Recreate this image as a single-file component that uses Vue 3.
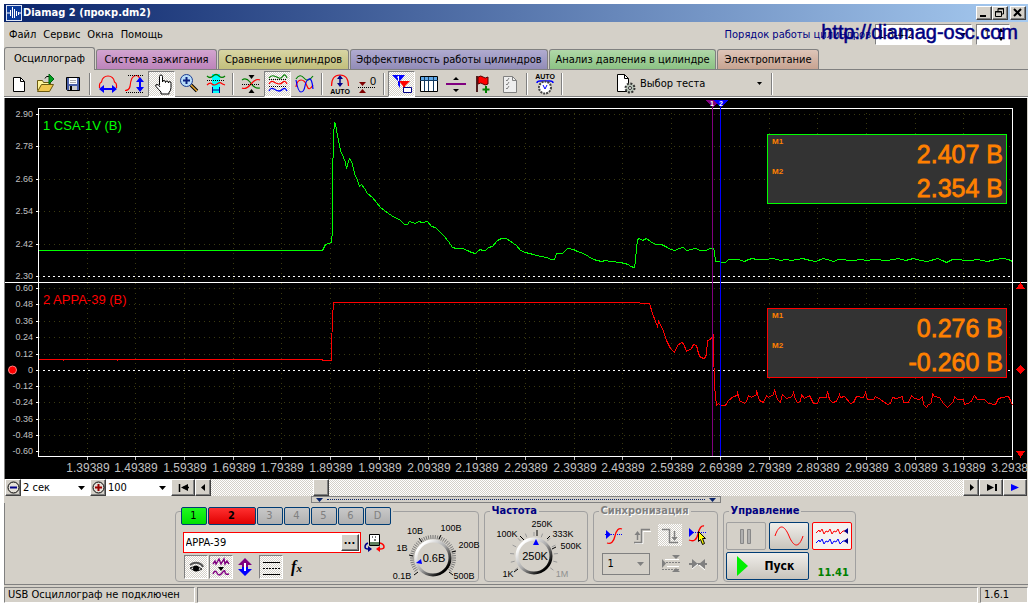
<script setup>
import { ref } from 'vue'

const tabs = [
  { id: 'osc', label: 'Осциллограф' },
  { id: 'ign', label: 'Система зажигания' },
  { id: 'cmp', label: 'Сравнение цилиндров' },
  { id: 'eff', label: 'Эффективность работы цилиндров' },
  { id: 'prs', label: 'Анализ давления в цилиндре' },
  { id: 'pow', label: 'Электропитание' }
]
const activeTab = ref('osc')
const menu = ['Файл', 'Сервис', 'Окна', 'Помощь']

const timeTicks = [
  [87, '1.39389'], [135, '1.49389'], [184, '1.59389'], [233, '1.69389'], [281, '1.79389'],
  [330, '1.89389'], [379, '1.99389'], [428, '2.09389'], [476, '2.19389'], [525, '2.29389'],
  [574, '2.39389'], [622, '2.49389'], [671, '2.59389'], [720, '2.69389'], [769, '2.79389'],
  [817, '2.89389'], [866, '2.99389'], [915, '3.09389'], [963, '3.19389'], [1012, '3.29389']
]
const levelTicks = [
  [114, '2.90'], [146, '2.78'], [179, '2.66'], [211, '2.54'], [244, '2.42'], [276, '2.30'],
  [288, '0.60'], [304, '0.48'], [321, '0.36'], [337, '0.24'], [354, '0.12'], [370, '0'],
  [386, '-0.12'], [402, '-0.24'], [419, '-0.36'], [435, '-0.48'], [451, '-0.60']
]
const zeroLines = [276, 370]

const green = '38,250 322,250 325,244 328,243 331,242 332,229 332,182 333,135 334,122 335,123 336,130 338,140 340,150 343,157 345,162 346,168 348,161 349,158 351,161 352,164 354,173 357,180 359,186 361,184 364,188 367,193 372,197 376,202 380,207 384,210 388,213 394,217 399,219 402,222 404,224 407,224 409,221 412,222 415,223 418,221 422,222 427,221 431,226 435,227 438,230 443,235 448,241 452,247 456,248 462,248 467,250 471,252 475,253 478,250 480,249 482,250 485,250 488,247 492,246 497,240 501,238 506,238 513,243 516,245 520,250 525,252 533,254 540,256 547,257 550,259 554,259 556,253 562,253 567,248 573,249 577,251 583,253 593,259 601,261 605,260 610,261 620,262 628,264 630,266 634,267 635,260 636,248 637,239 639,238 642,240 646,238 650,241 655,244 661,244 667,247 670,249 675,250 678,248 683,247 686,250 695,248 700,250 706,250 709,248 713,248 714,251 715,261 725,262 728,259 738,259 744,261 748,259 752,258 756,259 765,259 773,258 780,260 785,259 791,260 797,259 802,258 810,260 815,261 823,258 830,260 833,261 838,259 853,260 860,259 867,260 873,259 887,260 898,258 905,260 913,258 920,260 927,261 937,258 942,260 946,262 952,259 970,260 977,259 987,261 995,259 1003,258 1008,259 1012,261'
const red = '38,359 63,359 63,360 64,359 117,359 117,360 118,359 322,359 322,360 331,360 331,347 332,318 333,302 639,302 640,303 649,303 652,313 655,321 657,326 658,321 662,328 666,340 670,348 674,352 677,345 681,342 683,343 686,351 691,348 693,344 696,345 698,353 700,357 704,358 706,354 707,340 710,339 713,334 713,348 714,385 716,405 718,403 721,405 725,405 728,400 733,396 737,395 737,391 739,400 744,403 746,401 748,395 751,397 756,394 756,390 759,400 763,402 766,395 768,397 773,394 774,389 777,399 780,402 782,394 786,398 792,396 793,392 795,399 797,402 800,401 801,394 804,398 809,395 813,403 817,403 819,397 826,397 827,391 829,399 832,402 836,401 839,394 840,397 844,396 850,403 853,402 856,396 863,397 865,392 867,399 873,399 875,396 880,399 887,404 890,403 892,397 896,398 902,396 903,402 908,402 911,395 914,398 919,399 922,396 923,404 926,407 928,404 931,403 932,393 934,396 939,397 943,403 947,407 953,401 954,396 957,399 963,399 964,404 970,402 974,395 977,399 984,399 988,403 995,404 998,398 1002,397 1008,396 1010,400 1012,405'

const readouts = [
  { y: 134, color: '#00ff00', m1: '2.407 В', m2: '2.354 В' },
  { y: 308, color: '#ff0000', m1: '0.276 В', m2: '-0.260 В' }
]

const channels = ['1', '2', '3', '4', '5', '6', 'D']

const ring = (cx, cy, r1, r2, step, a0, a1) => {
  let d = ''
  for (let a = a0; a <= a1; a += step) {
    const t = (a * Math.PI) / 180
    const c = Math.cos(t)
    const s = Math.sin(t)
    d += `M${(cx + c * r1).toFixed(1)} ${(cy + s * r1).toFixed(1)}L${(cx + c * r2).toFixed(1)} ${(cy + s * r2).toFixed(1)}`
  }
  return d
}
const voltRing = ring(43, 38, 19, 23, 6, 144, 396)
const freqRing = ring(49, 39, 20, 24, 21, 144, 396)

const amplitude = ref(15)
const frequency = ref(50)
const sensor = ref('APPA-39')
</script>

<template>
  <div class="window">
    <header class="title">
      <svg class="logo" viewBox="0 0 16 16" aria-hidden="true">
        <rect width="16" height="16" fill="#0a3a9a" />
        <rect x=".5" y=".5" width="15" height="15" fill="none" stroke="#dfe6f5" />
        <path d="M1 8h3M4.500 5v6M6.500 2v11M8.500 4v9M10.500 6v5M12.500 7v3M12 8h3" stroke="#fff" fill="none" />
      </svg>
      <h1>Diamag 2 (прокр.dm2)</h1>
      <div class="winbtns">
        <button class="bevel" aria-label="Свернуть"><svg viewBox="0 0 14 12"><path d="M3 9h6" stroke="#000" stroke-width="2" /></svg></button>
        <button class="bevel" aria-label="Восстановить"><svg viewBox="0 0 14 12"><path d="M5 4V1.500h5.500V7H9M5 2h6" stroke="#000" fill="none" /><path d="M2.500 4.500h6v5h-6zM2 5h7" stroke="#000" fill="none" /></svg></button>
        <button class="bevel close" aria-label="Закрыть"><svg viewBox="0 0 14 12"><path d="M3 2l7 7M10 2L3 9" stroke="#000" stroke-width="2" /></svg></button>
      </div>
    </header>

    <div class="menubar">
      <nav>
        <button v-for="m in menu" :key="m">{{ m }}</button>
      </nav>
      <div class="order">
        <label for="order">Порядок работы цилиндров</label>
        <select id="order" class="orderlist"><option>1-3-4-2</option></select>
        <input class="num" value="1" aria-label="Номер цилиндра" />
        <a class="site" href="http://diamag-osc.com">http://diamag-osc.com</a>
      </div>
    </div>

    <div class="tabs" role="tablist">
      <button
        v-for="t in tabs"
        :key="t.id"
        role="tab"
        :aria-selected="activeTab === t.id"
        :class="['tab', t.id, { active: activeTab === t.id }]"
        @click="activeTab = t.id"
      >{{ t.label }}</button>
    </div>

    <div class="toolbar">
      <button aria-label="Новый"><svg viewBox="0 0 24 24"><path d="M6.500 5.500h7l4 4v10h-11z" fill="#fff" stroke="#000" /><path d="M13.500 5.500v4h4" fill="none" stroke="#000" /></svg></button>
      <button aria-label="Открыть"><svg viewBox="0 0 24 24"><path d="M3.500 18.500v-10h5l1 2h7v3" fill="#fff59c" stroke="#6b5a10" /><path d="M3.500 19.500l4-7h12l-4 7z" fill="#f0c850" stroke="#6b5a10" /><path d="M11 6.500q1-3 4-2" stroke="#000" fill="none" /><path d="M15 2l5 5-5 5z" fill="#00a020" stroke="#006010" /></svg></button>
      <button aria-label="Сохранить"><svg viewBox="0 0 24 24"><path d="M5.500 5.500h13v13h-12l-1-1z" fill="#4a60a8" stroke="#000" /><path d="M8 6h8v6H8z" fill="#fff" /><path d="M9 8.500h6M9 10.500h6" stroke="#aaa" /><path d="M8 14h8v4H8z" fill="#ccc" /><path d="M9 14h2v4H9z" fill="#000" /></svg></button>
      <i class="sep"></i>
      <button aria-label="Развёртка"><svg viewBox="0 0 24 24"><path d="M3.500 16v-3q0-2 2-3 1-6 6.500-6t6.500 6q2 1 2 3v3" fill="none" stroke="#f00" stroke-width="1.200" /><path d="M6 17h12" stroke="#00f" stroke-width="2" /><path d="M3 17l5-4v8zM21 17l-5-4v8z" fill="#00f" /></svg></button>
      <button aria-label="Масштаб по амплитуде"><svg viewBox="0 0 24 24"><path d="M2 18.500q4 0 5-4 1-11 6-11 3 0 4 4" fill="none" stroke="#f00" stroke-width="1.200" /><path d="M5 3.500h15M3 20.500h17" stroke="#000" stroke-dasharray="1 1" /><path d="M17 8v8" stroke="#00f" stroke-width="2" /><path d="M17 5l-4 5h8zM17 20l-4-5h8z" fill="#00f" /></svg></button>
      <button class="on" aria-label="Рука"><svg viewBox="0 0 24 24"><path d="M9.500 13V4.500q0-1.500 1.500-1.500t1.500 1.500V10q0-1.500 1.500-1.500t1.500 2q0-1.500 1.500-1.500t1.500 2q0-1.500 1.300-1.500t1.200 2v4q0 3-2 5v1.500h-8V20q-2-2-5-5.500-1-2 1-2t3 2.500" fill="#fff" stroke="#000" /></svg></button>
      <button aria-label="Увеличить"><svg viewBox="0 0 24 24"><path d="M14 13l6 6" stroke="#000" stroke-width="3.500" /><path d="M14 13l6 6" stroke="#e8a830" stroke-width="1.500" /><circle cx="9.500" cy="8.500" r="6" fill="#b8dcf8" stroke="#1c3c90" /><path d="M9.500 5v7M6 8.500h7" stroke="#0a2080" stroke-width="2" /></svg></button>
      <button aria-label="Интервал"><svg viewBox="0 0 24 24"><path d="M8 2h8v19H8z" fill="#0ff" /><path d="M3 4q3 3 6 0t6 0 6 0" fill="none" stroke="#008000" stroke-width="1.200" /><path d="M3 8.500h18" stroke="#000" stroke-dasharray="1 1" /><path d="M3 13q3-3 5-1t5 0 4-1 4 2" fill="none" stroke="#f00" stroke-width="1.200" /><path d="M8.500 15v6M15.500 15v6M8 18h8" stroke="#008" /></svg></button>
      <i class="sep"></i>
      <button aria-label="Совместить"><svg viewBox="0 0 24 24"><path d="M9.500 3h6l-3 4zM12.500 17l3 4h-6z" fill="#000" /><path d="M3 8q4-3 8 2 4 7 10 6" fill="none" stroke="#008000" stroke-width="1.200" /><path d="M3 16q4 2 9-4t9-4" fill="none" stroke="#f00" stroke-width="1.200" /><path d="M3 12.500h18" stroke="#000" stroke-dasharray="1 1" /></svg></button>
      <button class="on" aria-label="Раздельно"><svg viewBox="0 0 24 24"><path d="M3 6q2-3 5-2t5 2 4-2 4 2" fill="none" stroke="#008000" stroke-width="1.200" /><path d="M3 12q2-4 5-2t5 2 4-2 4 2" fill="none" stroke="#f00" stroke-width="1.200" /><path d="M3 14.500h18M3 7.500h18" stroke="#000" stroke-dasharray="1 1" /><path d="M3 19q2-4 5-2t5 2 4-2 4 2" fill="none" stroke="#00f" stroke-width="1.300" /></svg></button>
      <button aria-label="Наложение"><svg viewBox="0 0 24 24"><path d="M3 7q4-6 8-1t9-2" fill="none" stroke="#008000" stroke-width="1.200" /><path d="M3 15q1-7 5-7t6 6 6-1" fill="none" stroke="#f00" stroke-width="1.200" /><path d="M3 8q2 12 5 12t4-6 4-7 4 10" fill="none" stroke="#00f" stroke-width="1.200" /></svg></button>
      <i class="sep"></i>
      <button aria-label="Авто масштаб"><svg viewBox="0 0 24 24"><path d="M3.500 14q0-11 8.500-11t8.500 11" fill="none" stroke="#f00" stroke-width="1.200" /><path d="M12 5v8" stroke="#008" stroke-width="1.500" /><path d="M12 3l-3 4h6zM12 15l-3-4h6z" fill="#008" /><text x="12" y="22" class="tiny" text-anchor="middle">AUTO</text></svg></button>
      <button aria-label="Сброс нуля"><svg viewBox="0 0 24 24"><path d="M4 10h7l-3.500 4zM7.500 17l3.500 4H4z" fill="#800000" /><path d="M3 15.500h18" stroke="#000" stroke-dasharray="1 1" /><text x="15" y="13" class="zero">0</text></svg></button>
      <i class="sep"></i>
      <button class="on" aria-label="Маркеры"><svg viewBox="0 0 24 24"><path d="M2 3h13l-5 6v7l-2-3v-4z" fill="#00f" /><path d="M9 9h11l-5 5v6l-2-2v-4z" fill="#f00" /><path d="M8.500 4v5M7 5.500l1.500-1" stroke="#fff" /><path d="M13.500 15.500h8v5h-8z" fill="#fff" stroke="#008" /></svg></button>
      <button aria-label="Таблица"><svg viewBox="0 0 24 24"><path d="M3.500 4.500h17v15h-17z" fill="#fff" stroke="#000" /><path d="M4 5h16v3H4z" fill="#60a8e8" /><path d="M3 8.500h18M7.500 5v14M11.500 5v14M16.500 5v14" stroke="#123a60" /></svg></button>
      <button aria-label="Разделитель"><svg viewBox="0 0 24 24"><path d="M2 12h20" stroke="#800080" stroke-width="2" /><path d="M12 5l3 3H9zM12 20l3-3H9z" fill="#000" /></svg></button>
      <button aria-label="Добавить флаг"><svg viewBox="0 0 24 24"><path d="M6 4v16" stroke="#502020" stroke-width="2" /><path d="M7 5q3-2 5 0t5 0v7q-3 2-5 0t-5 0z" fill="#f00" stroke="#500" /><path d="M15 14v7M11.500 17.500h7" stroke="#008000" stroke-width="2" /></svg></button>
      <button aria-label="Список"><svg viewBox="0 0 24 24"><path d="M5.500 4.500h9l4 4v12h-13z" fill="#eee" stroke="#808080" /><path d="M14.500 4.500v4h4M8 8l1 1 2-3M8 12l1 1 2-3M8 16l1 1 2-3" fill="none" stroke="#808080" /></svg></button>
      <i class="sep"></i>
      <button aria-label="Авто вольтметр"><svg viewBox="0 0 24 24"><text x="12" y="7" class="tiny" text-anchor="middle">AUTO</text><path d="M4 11q0-2 3-2h10q3 0 3 2" fill="none" stroke="#00f" stroke-width="1.500" /><circle cx="12" cy="15.500" r="6" fill="#fff" stroke="#444" stroke-width="2" stroke-dasharray="2 1" /><path d="M10 13l2 4 2-4" fill="none" stroke="#00f" /></svg></button>
      <i class="sep"></i>
      <button class="test">
        <svg viewBox="0 0 24 24"><path d="M3.500 2.500h7l4 4v13h-11z" fill="#fff" stroke="#000" /><path d="M10.500 2.500v4h4" fill="none" stroke="#000" /><circle cx="16" cy="16" r="4.500" fill="#b8c4b8" stroke="#333" stroke-width="2" stroke-dasharray="2 1.500" /><circle cx="16" cy="16" r="1.500" fill="#fff" stroke="#333" /></svg>
        <span>Выбор теста</span>
        <svg class="caret" viewBox="0 0 7 4"><path d="M1 0h5L3.500 3z" /></svg>
      </button>
      <i class="sep"></i>
    </div>

    <main class="scope">
      <svg viewBox="5 98 1022 381" role="img" aria-label="Осциллограмма">
        <g class="grid">
          <path v-for="t in timeTicks.slice(0, 19)" :key="'v' + t[0]" :d="`M${t[0] + 0.5} 113V456`" />
          <path v-for="l in levelTicks" :key="'h' + l[0]" :d="`M39 ${l[0] + 0.5}H1012`" />
        </g>
        <path v-for="z in zeroLines" :key="z" :d="`M43 ${z + 0.5}H1011`" stroke="#fff" stroke-dasharray="2 3" />
        <path d="M38.500 456.500V108.500H1012.500V456.500ZM5 282.500H1027" fill="none" stroke="#fff" />
        <g class="levels">
          <template v-for="l in levelTicks" :key="l[0]">
            <path :d="`M36 ${l[0] + 0.5}H38`" stroke="#fff" />
            <text x="33" :y="l[0] + 3">{{ l[1] }}</text>
          </template>
        </g>
        <g class="times">
          <template v-for="t in timeTicks" :key="t[0]">
            <path :d="`M${t[0] + 0.5} 457V460`" stroke="#c0c0c0" />
            <text :x="t[0] + 1" y="472">{{ t[1] }}</text>
          </template>
        </g>
        <polyline class="trace" :points="green" stroke="#00ff00" />
        <polyline class="trace" :points="red" stroke="#ff0000" />
        <text class="ch" x="43" y="130" fill="#00ff00">1 CSA-1V (В)</text>
        <text class="ch" x="43" y="304" fill="#ff0000">2 APPA-39 (В)</text>
        <path d="M712.500 100V456" stroke="#800080" />
        <path d="M720.500 100V456" stroke="#00f" />
        <path d="M705 100h15l-7 8z" fill="#800080" />
        <path d="M713 100h15l-7 8z" fill="#00f" />
        <text class="mk" x="712" y="106">1</text>
        <text class="mk" x="721" y="106">2</text>
        <g v-for="r in readouts" :key="r.y">
          <rect x="767.500" :y="r.y + 0.5" width="239" height="69" fill="#333" :stroke="r.color" />
          <text class="m" x="772" :y="r.y + 10">M1</text>
          <text class="m" x="772" :y="r.y + 40">M2</text>
          <text class="val" x="1003" :y="r.y + 29">{{ r.m1 }}</text>
          <text class="val" x="1003" :y="r.y + 63">{{ r.m2 }}</text>
        </g>
        <path d="M1016 289l4.500-7 4.500 7zM1016 451h9l-4.500 7zM1020.500 365l4.500 4.500-4.500 4.500-4.500-4.500z" fill="#f00" />
        <circle cx="12.500" cy="370" r="4" fill="#f00" stroke="#ff8080" />
      </svg>
    </main>

    <div class="timebar">
      <button class="bevel sq" aria-label="Уменьшить"><svg viewBox="0 0 15 15"><circle cx="7.500" cy="7.500" r="5.500" fill="#e4e0d8" stroke="#000" /><path d="M4 7.500h7" stroke="#008" stroke-width="2" /></svg></button>
      <select class="flat w68" aria-label="Развёртка"><option>2 сек</option></select>
      <button class="bevel sq" aria-label="Увеличить"><svg viewBox="0 0 15 15"><circle cx="7.500" cy="7.500" r="5.500" fill="#e4e0d8" stroke="#000" /><path d="M4 7.500h7M7.500 4v7" stroke="#900" stroke-width="2" /></svg></button>
      <select class="flat w64" aria-label="Масштаб"><option>100</option></select>
      <button class="bevel wide" aria-label="В начало"><svg viewBox="0 0 15 15"><path d="M3.500 4v8M7 7.500h6" stroke="#000" stroke-width="1.500" /><path d="M12 4v7L5 7.500z" /></svg></button>
      <button class="bevel sq" aria-label="Назад"><svg viewBox="0 0 15 15"><path d="M9 4v7L5 7.500z" /></svg></button>
      <div class="track"><button class="bevel sq" aria-label="Позиция"></button></div>
      <button class="bevel sq" aria-label="Вперёд"><svg viewBox="0 0 15 15"><path d="M6 4v7l4-3.500z" /></svg></button>
      <button class="bevel wide" aria-label="В конец"><svg viewBox="0 0 15 15"><path d="M3 4v7l7-3.500z" /><path d="M12 4v7" stroke="#000" stroke-width="2" /></svg></button>
      <button class="bevel wide" aria-label="Воспроизвести"><svg viewBox="0 0 15 15"><path d="M3 4v7l8-3.500z" fill="#00f" /></svg></button>
    </div>

    <div class="splitter" aria-hidden="true">
      <svg viewBox="0 0 7 4"><path d="M0 0h7L3.500 4z" fill="#0a246a" /></svg>
      <i></i>
      <svg viewBox="0 0 7 4"><path d="M0 0h7L3.500 4z" fill="#0a246a" /></svg>
    </div>

    <section class="panel">
      <div class="group">
        <div class="left">
          <div class="channels">
            <button v-for="(c, i) in channels" :key="c" :class="['chan', { g: i === 0, r: i === 1 }]" :disabled="i > 1">{{ c }}</button>
          </div>
          <div class="sensorrow">
            <div class="sensor">
              <input v-model="sensor" aria-label="Датчик" />
              <button class="bevel" aria-label="Выбрать датчик">...</button>
            </div>
            <button class="bare" aria-label="Вольтметр"><svg viewBox="0 0 22 22"><path d="M6.500 2.500h10v11h-10z" fill="#fff" stroke="#000" /><path d="M7 10h9v3H7z" fill="#608060" /><path d="M9 5h1M12 5h1M12 7v2" stroke="#000" /><path d="M5 11q-3 1-3 4 0 2 3 2" fill="none" stroke="#008" stroke-width="1.500" /><path d="M5 14l4 3-4 3z" fill="#008" /><path d="M17 11q4 1 4 4 0 2-4 2" fill="none" stroke="#f00" stroke-width="1.500" /><path d="M17 14l-4 3 4 3z" fill="#f00" /></svg></button>
          </div>
          <div class="tools">
            <button class="on" aria-label="Видимость"><svg viewBox="0 0 22 22"><path d="M5 9q4-3 8-2t5 4" fill="none" stroke="#555" stroke-width="2" /><path d="M5 12q6-3 12 1-6 4-12-1z" fill="#ddd" stroke="#222" /><circle cx="11" cy="12.500" r="3" /></svg></button>
            <button class="on" aria-label="Сглаживание"><svg viewBox="0 0 22 22"><path d="M3 8l2-3 1 3 3-5 2 5 3-5 1 5 2-3 2 3M3 18q2-5 4-1t5 0 3-1 4 2" fill="none" stroke="#800080" stroke-width="1.400" /><path d="M8 11h6l-3 4z" /></svg></button>
            <button aria-label="Смещение"><svg viewBox="0 0 22 22"><path d="M11 2L4 9h4v2h6V9h4z" fill="#800080" /><path d="M11 20l-7-7h4v-2h6v2h4z" fill="#00f" /><path d="M11 7v8" stroke="#fff" stroke-width="2" /></svg></button>
            <button class="on" aria-label="Линии"><svg viewBox="0 0 22 22"><path d="M3 6.500h17M3 18.500h17" stroke="#000" /><path d="M3 12.500h17" stroke="#000" stroke-dasharray="2 1" /></svg></button>
            <button class="fx" aria-label="Функция"><i>f</i><small>x</small></button>
          </div>
        </div>
        <div class="knob">
          <svg viewBox="0 0 93 66">
            <defs>
              <linearGradient id="metal" x1="0" y1="0" x2="1" y2="1"><stop offset=".15" stop-color="#fff" /><stop offset=".5" stop-color="#aaa" /><stop offset=".85" stop-color="#000" /></linearGradient>
            </defs>
            <path :d="voltRing" stroke="#777" />
            <circle cx="43" cy="38" r="17" fill="#d4d0c8" stroke="url(#metal)" stroke-width="3" />
            <path d="M26 43l5-4 1 5z" fill="#00f" />
            <path d="M19 35l4 1M29 18l3 4M51 15l-2 4M62 32l4-1M24 55l4-3M59 52l4 3" stroke="#000" />
            <text x="44" y="42" class="big">0.6В</text>
            <text x="25" y="14">10В</text>
            <text x="61" y="11">100В</text>
            <text x="12" y="31">1В</text>
            <text x="79" y="28">200В</text>
            <text x="12" y="59">0.1В</text>
            <text x="74" y="59">500В</text>
          </svg>
          <input v-model="amplitude" type="range" aria-label="Предел, В" />
        </div>
      </div>

      <fieldset class="freq">
        <legend>Частота</legend>
        <div class="knob">
          <svg viewBox="0 0 102 64">
            <path :d="freqRing" stroke="#999" />
            <circle cx="49" cy="39" r="17" fill="#d4d0c8" stroke="url(#metal)" stroke-width="3" />
            <path d="M51 22l3 6h-6z" fill="#00f" />
            <path d="M52 13v6M35 19l4 4M62 22l3-3M67 32l4-2M29 55l4-3" stroke="#000" />
            <text x="50" y="43" class="big">250K</text>
            <text x="57" y="10">250K</text>
            <text x="22" y="20">100K</text>
            <text x="78" y="20">333K</text>
            <text x="86" y="32">500K</text>
            <text x="23" y="60">1K</text>
            <text x="77" y="60" class="dim">1M</text>
          </svg>
          <input v-model="frequency" type="range" aria-label="Частота" />
        </div>
      </fieldset>

      <fieldset class="sync">
        <legend>Синхронизация</legend>
        <div class="syncrow">
          <button class="bare" aria-label="Уровень"><svg viewBox="0 0 22 22"><path d="M2 10.500h18" stroke="#00f" stroke-dasharray="1 1" /><path d="M3 6l5 4.500L3 15z" fill="#00f" /><path d="M4 19q6 2 8-7t7-7" fill="none" stroke="#f00" stroke-width="1.300" /></svg></button>
          <button class="bare" disabled aria-label="Фронт"><svg viewBox="0 0 22 22"><path d="M4 19.500h8v-12h8" fill="none" stroke="#fff" /><path d="M3 18.500h7.500v-13H19M6.500 9v7" fill="none" stroke="#808080" stroke-width="1.500" /><path d="M6.500 7l3 4h-6z" fill="#808080" /></svg></button>
          <button class="bare hatch" disabled aria-label="Спад"><svg viewBox="0 0 22 22"><path d="M3 5.500h7.500v13H19M15.500 7v7" fill="none" stroke="#808080" stroke-width="1.500" /><path d="M15.500 17l3-4h-6z" fill="#808080" /></svg></button>
          <button class="bare" aria-label="Захват"><svg viewBox="0 0 22 22"><path d="M2 8.500h18" stroke="#00f" stroke-dasharray="1 1" /><path d="M2 4l5 4.500L2 13z" fill="#00f" /><path d="M2 16q7 3 9-6t6-8" fill="none" stroke="#f00" stroke-width="1.300" /><path d="M11.500 7.500l7 7h-3l2 5-2 1-2-5-2 2z" fill="#ff0" stroke="#000" /></svg></button>
        </div>
        <div class="syncrow">
          <select class="syncsel" aria-label="Канал"><option>1</option></select>
          <button class="bare" disabled aria-label="Окно"><svg viewBox="0 0 22 22"><path d="M3 6v9l4-4.500z" fill="#808080" /><path d="M7 9.500h14M3 16.500h17" stroke="#808080" stroke-dasharray="2 1" /><path d="M6 6.500h14M8 13.500h12" stroke="#fff" /><path d="M13 2h8l-4 4zM17 15l4 4h-8z" fill="#808080" /></svg></button>
          <button class="bare" disabled aria-label="Сжать"><svg viewBox="0 0 22 22"><path d="M2 11h18" stroke="#808080" stroke-width="2" /><path d="M5 6l6 5-6 5zM18 6l-6 5 6 5z" fill="#808080" /><path d="M5 16l6-5M12 12l6 5" stroke="#fff" /></svg></button>
        </div>
      </fieldset>

      <fieldset class="ctrl">
        <legend>Управление</legend>
        <div class="row">
          <button class="xp off" disabled aria-label="Пауза"><svg viewBox="0 0 38 26"><path d="M13.500 6.500h3v14h-3zM20.500 6.500h3v14h-3z" fill="#b0b0b0" stroke="#888" /></svg></button>
          <button class="xp" aria-label="Синус"><svg viewBox="0 0 38 26"><path d="M5 13C9 1 14 1 19 13s10 12 14 0" fill="none" stroke="#f00" /></svg></button>
          <button class="xp redb" aria-label="Поток"><svg viewBox="0 0 38 26"><path d="M3 10l3-3 1 2 2-3 2 5 2-3 2 1 2-3 2 5 2-3 2 1 2-3 2 5 3-3h3" fill="none" stroke="#f00" /><path d="M3 20l3-3 1 2 2-3 2 5 2-3 2 1 2-3 2 5 2-3 2 1 2-3 2 5 3-3h3" fill="none" stroke="#00f" /><path d="M35 5v6l-4-3zM35 15v6l-4-3z" fill="#008" /></svg></button>
        </div>
        <div class="row end">
          <button class="xp start"><svg viewBox="0 0 12 20"><path d="M0 0v20L11 10z" fill="#00f000" /></svg>Пуск</button>
          <output>11.41</output>
        </div>
      </fieldset>
    </section>

    <footer class="status">
      <span class="s1">USB Осциллограф не подключен</span>
      <span class="s2"></span>
      <span class="s3">1.6.1</span>
    </footer>
  </div>
</template>

<style>
body {
  background: #fff;
}
</style>

<style scoped>
* {
  box-sizing: border-box;
}
.window {
  display: flex;
  flex-direction: column;
  min-height: 599px;
  margin: 4px;
  background: #d4d0c8;
  color: #000;
  font: 11px/14px "DejaVu Sans Condensed", "Noto Sans", sans-serif;
}
button, select, input {
  margin: 0;
  padding: 0;
  border: 0;
  border-radius: 0;
  background: none;
  color: inherit;
  font: inherit;
}
select {
  appearance: none;
}
svg {
  display: block;
  flex: none;
}
.bevel {
  background: #d4d0c8;
  border: 1px solid;
  border-color: #fff #404040 #404040 #fff;
  box-shadow: inset -1px -1px 0 #808080;
  display: flex;
  align-items: center;
  justify-content: center;
}
.title {
  display: flex;
  align-items: center;
  height: 18px;
  padding: 0 2px;
  background: linear-gradient(90deg, #0a246a, #a6caf0);
  color: #fff;
}
.logo {
  width: 16px;
  height: 16px;
}
.title h1 {
  margin: 0 0 0 1px;
  font-size: 11px;
  line-height: 16px;
}
.winbtns {
  display: flex;
  margin-left: auto;
}
.winbtns button {
  width: 16px;
  height: 14px;
}
.winbtns svg {
  width: 14px;
  height: 12px;
}
.winbtns .close {
  margin-left: 2px;
}
.menubar {
  display: flex;
  align-items: center;
  justify-content: space-between;
  height: 25px;
  padding: 0 18px 0 5px;
}
.menubar nav {
  display: flex;
  gap: 7px;
}
.order {
  position: relative;
  display: flex;
  align-items: center;
  gap: 4px;
  color: #000080;
}
.orderlist, .num {
  height: 21px;
  border: 1px solid;
  border-color: #808080 #fff #fff #808080;
  background: #fff no-repeat right 5px center;
  color: #000;
}
.orderlist {
  width: 97px;
  padding-left: 2px;
  background-image: url("data:image/svg+xml,%3Csvg xmlns='http://www.w3.org/2000/svg' width='7' height='4'%3E%3Cpath d='M0 0h7L3.500 4z'/%3E%3C/svg%3E");
}
.num {
  width: 34px;
  padding-left: 7px;
  background-image: url("data:image/svg+xml,%3Csvg xmlns='http://www.w3.org/2000/svg' width='6' height='13'%3E%3Cpath d='M0 4h6L3 0zM0 9h6L3 13z'/%3E%3C/svg%3E");
}
.site {
  position: absolute;
  right: -8px;
  top: -2px;
  color: #000080;
  font: 20px/20px "Liberation Sans", sans-serif;
  -webkit-text-stroke: 0.5px #000080;
  text-decoration: none;
  white-space: nowrap;
}
.tabs {
  display: flex;
  align-items: flex-end;
  gap: 1px;
  height: 23px;
  border-bottom: 1px solid #808080;
}
.tab {
  height: 20px;
  border: 1px solid #808080;
  border-bottom: 0;
  border-radius: 3px 3px 0 0;
  white-space: nowrap;
  text-align: center;
}
.osc { width: 91px; }
.ign { width: 121px; background: linear-gradient(#d2a4d0, #bd84bb); }
.cmp { width: 131px; background: linear-gradient(#d8d5a4, #c2bf7c); }
.eff { width: 198px; background: linear-gradient(#b0abd0, #928cb8); }
.prs { width: 167px; background: linear-gradient(#b0d8a8, #8cc284); }
.pow { width: 102px; background: linear-gradient(#dec5b8, #c7a391); }
.tab.active {
  height: 23px;
  margin-bottom: -1px;
  background: #d4d0c8;
}
.toolbar {
  display: flex;
  align-items: center;
  height: 28px;
  padding-left: 1px;
  border-bottom: 1px solid #fff;
  box-shadow: inset 0 -1px 0 #808080;
}
.toolbar button {
  display: flex;
  align-items: center;
  justify-content: center;
  width: 27px;
  height: 26px;
}
.toolbar svg {
  width: 24px;
  height: 24px;
}
.on {
  border: 1px solid;
  border-color: #808080 #fff #fff #808080;
}
.on, .hatch, .track {
  background: repeating-conic-gradient(#fff 0 25%, #d4d0c8 0 50%) 0 0 / 2px 2px;
}
.sep {
  width: 2px;
  height: 22px;
  margin: 0 3px;
  background: linear-gradient(90deg, #808080 50%, #fff 50%);
}
.toolbar .test {
  width: 202px;
  justify-content: flex-start;
  padding: 0 5px 0 48px;
}
.test span {
  margin-left: 2px;
}
.toolbar .caret {
  width: 7px;
  height: 4px;
  margin-left: auto;
}
.tiny {
  font: bold 7px "Liberation Sans", sans-serif;
}
.zero {
  font: 11px "Liberation Sans", sans-serif;
}
.scope {
  flex: 1;
  margin: 0 1px;
  background: #000;
  box-shadow: -1px 0 0 #808080;
  font-family: "Liberation Sans", sans-serif;
}
.scope svg {
  width: 100%;
}
.scope path, .scope rect, .trace {
  shape-rendering: crispEdges;
}
.grid path {
  stroke: #3a3a10;
  stroke-dasharray: 1 4;
}
.levels text {
  fill: #c0c0c0;
  font-size: 9px;
  text-anchor: end;
}
.times text {
  fill: #c0c0c0;
  font-size: 12px;
  text-anchor: middle;
}
.trace {
  fill: none;
  transform: translate(0.5px, 0.5px);
}
.ch {
  font-size: 13px;
}
.mk {
  fill: #fff;
  font-size: 7px;
  font-weight: bold;
  text-anchor: middle;
}
.m {
  fill: #ff8000;
  font-size: 8px;
  font-weight: bold;
}
.val {
  fill: #ff8000;
  stroke: #ff8000;
  stroke-width: 0.8px;
  font-size: 25px;
  text-anchor: end;
}
.timebar {
  display: flex;
  height: 17px;
  margin: 0 1px;
}
.timebar svg {
  width: 15px;
  height: 15px;
}
.sq {
  width: 16px;
}
.wide {
  width: 24px;
}
.flat {
  padding: 0 2px;
  background: #fff url("data:image/svg+xml,%3Csvg xmlns='http://www.w3.org/2000/svg' width='7' height='4'%3E%3Cpath d='M0 0h7L3.500 4z'/%3E%3C/svg%3E") no-repeat right 5px center;
}
.w68 { width: 69px; }
.w64 { width: 65px; }
.track {
  flex: 1;
  display: flex;
  padding-left: 10%;
}
.splitter {
  display: flex;
  align-items: center;
  align-self: center;
  gap: 4px;
  width: 40%;
  height: 7px;
  padding: 0 4px;
  border: 1px solid #808080;
}
.splitter svg {
  width: 7px;
  height: 4px;
}
.splitter i {
  flex: 1;
  border-top: 1px dotted #0a246a;
}
.panel {
  display: flex;
  justify-content: center;
  gap: 5px;
  padding: 2px 6px 2px 3px;
  border-bottom: 1px solid #808080;
  border-left: 1px solid #808080;
}
.group, fieldset {
  min-width: 0;
  margin: 0;
  border: 1px solid #a0a0a0;
  border-radius: 4px;
}
fieldset {
  padding: 0;
  height: 77px;
}
legend {
  margin-left: 5px;
  padding: 0 2px;
  font-weight: bold;
  line-height: 12px;
  color: #000080;
}
.group {
  display: flex;
  justify-content: space-between;
  width: 304px;
  height: 71px;
  margin-top: 6px;
  padding-left: 5px;
}
.channels {
  display: flex;
  gap: 1px;
  margin-top: -5px;
  padding-right: 2px;
  background: #d4d0c8;
}
.chan {
  width: 26px;
  height: 18px;
  border: 1px solid #003c74;
  border-radius: 2px;
  background: linear-gradient(#c8c8c8, #b0b0b0);
  color: #808080;
}
.chan.g {
  background: linear-gradient(#20f820, #00e000);
  color: #000;
}
.chan.r {
  width: 48px;
  background: linear-gradient(#ff3030, #e00000);
  color: #000;
  font-weight: bold;
}
.sensorrow {
  display: flex;
  gap: 1px;
  margin: 7px 0 0 2px;
}
.sensor {
  display: flex;
  width: 178px;
  height: 21px;
  padding: 1px;
  border: 1px solid #f00;
  background: #fff;
}
.sensor input {
  flex: 1;
  min-width: 0;
  padding-left: 1px;
}
.sensor button {
  width: 18px;
  line-height: 8px;
  padding-bottom: 4px;
  font-weight: bold;
}
.bare {
  display: flex;
  align-items: center;
  justify-content: center;
  width: 24px;
  height: 22px;
}
.bare svg, .tools svg {
  width: 22px;
  height: 22px;
}
.tools {
  display: flex;
  gap: 1px;
  margin: 1px 0 0 3px;
}
.tools button {
  width: 24px;
  height: 24px;
}
.tools .fx {
  margin-left: 1px;
  font: bold 16px/20px "Liberation Serif", serif;
}
.fx small {
  font-size: 11px;
  font-style: italic;
}
.knob {
  position: relative;
}
.knob input {
  position: absolute;
  inset: 0;
  width: 100%;
  height: 100%;
  opacity: 0;
}
.knob text {
  font: 9px "Liberation Sans", sans-serif;
  text-anchor: middle;
}
.knob .big {
  font-size: 11px;
}
.knob .dim {
  fill: #909090;
}
.group .knob {
  width: 93px;
  padding-top: 8px;
  margin: 0 2px 0 -3px;
}
.group .knob svg {
  height: 66px;
  margin-bottom: -4px;
}
.freq {
  width: 104px;
}
.sync {
  width: 125px;
}
.sync legend {
  color: #808080;
  text-shadow: 1px 1px 0 #fff;
}
.ctrl {
  width: 133px;
}
.syncrow {
  display: flex;
  gap: 4px;
  margin: 7px 0 0 8px;
}
.syncsel {
  width: 48px;
  height: 22px;
  margin-right: 4px;
  padding: 0 5px;
  border: 1px solid #808080;
  background: url("data:image/svg+xml,%3Csvg xmlns='http://www.w3.org/2000/svg' width='7' height='4'%3E%3Cpath fill='%23808080' d='M0 0h7L3.500 4z'/%3E%3C/svg%3E") no-repeat right 5px center;
}
.row {
  display: flex;
  gap: 3px;
  margin: 5px 0 0 2px;
}
.end {
  margin-top: 2px;
  align-items: flex-end;
  gap: 9px;
}
.xp {
  width: 40px;
  height: 28px;
  border: 1px solid #003c74;
  border-radius: 2px;
  background: linear-gradient(#f0eeea, #c8c4bc);
}
.xp svg {
  width: 38px;
  height: 26px;
}
.off {
  border-color: #a0a0a0;
  background: #d4d0c8;
}
.redb {
  border-color: #f00;
  background: #f4f2f0;
}
.start {
  display: flex;
  align-items: center;
  gap: 16px;
  width: 83px;
  padding-left: 10px;
  font-size: 12px;
  font-weight: bold;
}
.start svg {
  width: 12px;
  height: 20px;
}
output {
  color: #008000;
  font-size: 11px;
  font-weight: bold;
}
.status {
  display: flex;
  gap: 2px;
  padding-top: 2px;
}
.status span {
  height: 16px;
  padding: 0 3px;
  border: 1px solid;
  border-color: #808080 #fff #fff #808080;
  white-space: nowrap;
}
.s1 { width: 191px; }
.s2 { flex: 1; }
.s3 { width: 48px; }
</style>
